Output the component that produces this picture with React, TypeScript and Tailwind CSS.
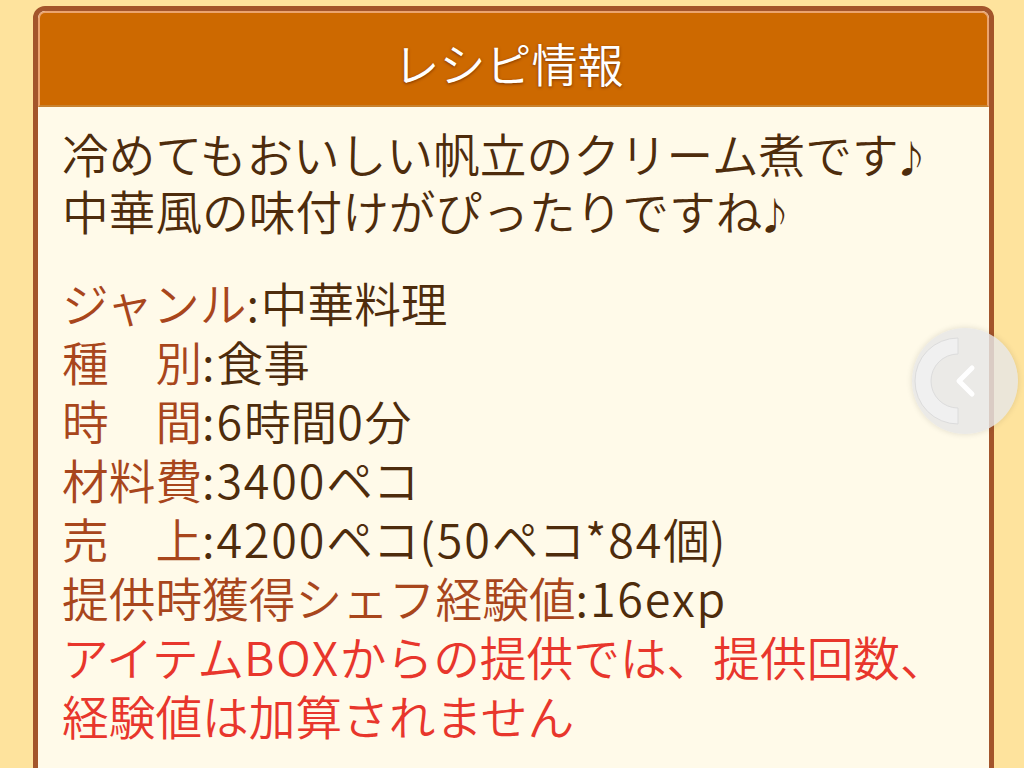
import React from "react";

const font = { fontFamily: '"Noto Sans CJK JP", "Noto Sans", sans-serif' };

function Mixed({ text }: { text: string }) {
  const parts = text.split(/([\x20-\x7e]+|♪)/).filter((p) => p.length > 0);
  return (
    <>
      {parts.map((p, i) =>
        p === "♪" ? (
          <span key={i} className="text-[37px] leading-none ml-[-6px]">
            ♪
          </span>
        ) : /^[\x20-\x7e]+$/.test(p) ? (
          <span key={i} className="tracking-[1.8px]">
            {p}
          </span>
        ) : (
          <span key={i}>{p}</span>
        )
      )}
    </>
  );
}

function Row({ label, value }: { label: string; value: string }) {
  return (
    <div className="whitespace-nowrap">
      <span className="text-[#a8461c]">{label}</span>
      <span className="text-[#4e2c0c]">
        <Mixed text={":" + value} />
      </span>
    </div>
  );
}

export default function App() {
  return (
    <div
      className="relative w-[1024px] h-[768px] overflow-hidden bg-[#fee39d] pt-[6px] pl-[33px] font-[350]"
      style={font}
    >
      <div className="w-[961px] h-[780px] rounded-[12px] border-[5px] border-[#a3552b] bg-[#fffae9] overflow-hidden flex flex-col">
        <div className="h-[96px] shrink-0 bg-[#cd6900] border-t-[2px] border-x-[2px] border-[#eba46f] rounded-t-[7px] border-b-[2px] border-b-[#c8822f] flex items-center justify-center">
          <span className="text-white text-[46px] leading-none pt-[6px] pr-[10px] [text-shadow:0_1px_3px_rgba(90,30,0,0.7)]">
            レシピ情報
          </span>
        </div>
        <div className="pl-[24px] pt-[17px] text-[46.7px]">
          <div className="leading-[57px] text-[#4e2c0c] whitespace-nowrap">
            <div>
              <Mixed text="冷めてもおいしい帆立のクリーム煮です♪" />
            </div>
            <div>
              <Mixed text="中華風の味付けがぴったりですね♪" />
            </div>
          </div>
          <div className="leading-[59px] mt-[34px]">
            <Row label="ジャンル" value="中華料理" />
            <Row label="種　別" value="食事" />
            <Row label="時　間" value="6時間0分" />
            <Row label="材料費" value="3400ペコ" />
            <Row label="売　上" value="4200ペコ(50ペコ*84個)" />
            <Row label="提供時獲得シェフ経験値" value="16exp" />
            <div className="text-[#e8362c] whitespace-nowrap">
              <Mixed text="アイテムBOXからの提供では、提供回数、" />
              <br />
              経験値は加算されません
            </div>
          </div>
        </div>
      </div>

      <div className="absolute left-[912px] top-[328px] w-[106px] h-[106px] rounded-full bg-[rgba(230,230,230,0.82)] shadow-[0_0_6px_rgba(0,0,0,0.12)]">
        <svg width="106" height="106" viewBox="0 0 106 106" className="absolute left-0 top-0">
          <path
            d="M46 10 A43 43 0 0 0 46 96 L46 80 A27 27 0 0 1 46 26 Z"
            fill="#f0f0f0"
            stroke="#dcdcdc"
            strokeWidth="1"
          />
          <path
            d="M60 40 L47 53 L60 66"
            fill="none"
            stroke="#ffffff"
            strokeWidth="5"
            strokeLinecap="round"
            strokeLinejoin="round"
          />
        </svg>
      </div>
    </div>
  );
}
